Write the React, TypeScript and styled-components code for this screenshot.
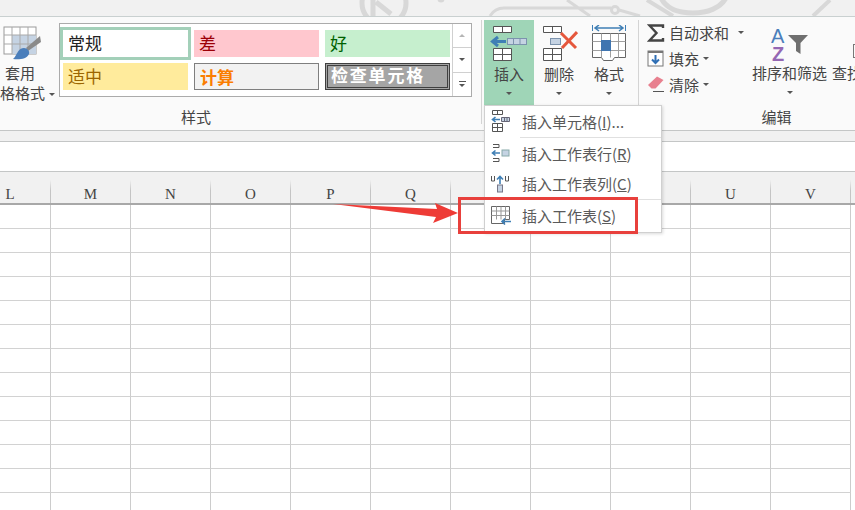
import React from "react";
import styled, { createGlobalStyle } from "styled-components";

const Global = createGlobalStyle`
  html, body {
    margin: 0;
    padding: 0;
    background: #ffffff;
    overflow: hidden;
  }
  body {
    font-family: "Noto Sans CJK SC", "Liberation Sans", sans-serif;
  }
`;

// R, S and T sit behind the open menu, so their letters never show
const COLUMNS = ["L", "M", "N", "O", "P", "Q", "", "", "", "U", "V"];
const ROWS = Array.from({ length: 13 }, (_, i) => i);

function TableStyleIcon() {
  return (
    <svg width="40" height="36" viewBox="0 0 40 36">
      <rect x="3" y="1" width="32" height="27" fill="#fff" stroke="#9a9a9a" />
      <rect x="11" y="9" width="24" height="19" fill="#c5d3e3" />
      <path d="M3 9h32M3 18h32M11 1v27M19 1v27M27 1v27" stroke="#a9a9a9" fill="none" />
      <path d="M39 10 L25 22 L27 25 L40 16 Z" fill="#8a8a8a" />
      <path d="M23 22c-5 0-6 4-8 7-1 2-2 3-3 4 6 1 14 0 16-5 1-3-2-6-5-6z" fill="#4a7ebb" />
    </svg>
  );
}

function InsertCellsIcon() {
  return (
    <svg width="38" height="38" viewBox="0 0 38 38">
      <path d="M3.500 1.500h18v6h-18zM12.500 1.500v6M3.500 23.500h18v12h-18zM12.500 23.500v12M3.500 29.500h18" fill="#fff" stroke="#555" />
      <rect x="17.500" y="13.500" width="19" height="6" fill="#c5d3e3" stroke="#7c93ad" />
      <path d="M23.500 13.500v6M30 13.500v6" stroke="#7c93ad" />
      <path d="M16 16.500H4M8 12 2.500 16.500 8 21" fill="none" stroke="#3f7fb5" strokeWidth="3" />
    </svg>
  );
}

function DeleteCellsIcon() {
  return (
    <svg width="38" height="38" viewBox="0 0 38 38">
      <path d="M3.500 1.500h18v6h-18zM12.500 1.500v6M3.500 23.500h18v12h-18zM12.500 23.500v12M3.500 29.500h18" fill="#fff" stroke="#555" />
      <rect x="10.500" y="13.500" width="10" height="6" fill="#c5d3e3" stroke="#7c93ad" />
      <path d="M21 8l15 15M37 7 22 23" stroke="#e5573c" strokeWidth="3" fill="none" />
    </svg>
  );
}

function FormatCellsIcon() {
  return (
    <svg width="38" height="38" viewBox="0 0 38 38">
      <path d="M2.500 0v6M35.500 0v6" stroke="#3f7fb5" fill="none" />
      <path d="M5 3h28M9 0 5 3l4 3M29 0l4 3-4 3" stroke="#3f7fb5" strokeWidth="1.500" fill="none" />
      <path d="M2.500 8.500h33v24h-11l-2 3h-9l-2-3h-9z" fill="#fff" stroke="#666" />
      <path d="M2.500 16.500h33M2.500 25.500h33M11.500 8.500v24M20.500 8.500v24M28.500 8.500v24" stroke="#a0a0a0" fill="none" />
      <rect x="11" y="15" width="10" height="11" fill="#4075b0" />
    </svg>
  );
}

function SigmaIcon() {
  return (
    <svg width="18" height="18" viewBox="0 0 18 18">
      <path d="M16 4V1.500H2.500L9.500 9l-7 7.500H16V14" fill="none" stroke="#444" strokeWidth="2.400" />
    </svg>
  );
}

function FillIcon() {
  return (
    <svg width="18" height="18" viewBox="0 0 18 18">
      <rect x="1" y="1" width="15" height="15" fill="#fff" stroke="#777" />
      <rect x="1" y="1" width="15" height="2" fill="#777" />
      <path d="M8.500 5v8M5 9.500l3.500 3.500 3.500-3.500" fill="none" stroke="#2f6fb5" strokeWidth="2" />
    </svg>
  );
}

function EraserIcon() {
  return (
    <svg width="18" height="18" viewBox="0 0 18 18">
      <path d="M10 1.500l6.500 3.500-8 8.500H4.500L1 10z" fill="#e8808f" />
      <path d="M6 16.500h11" stroke="#555" />
    </svg>
  );
}

function SortIcon() {
  return (
    <svg width="38" height="36" viewBox="0 0 38 36">
      <text x="0" y="17" fontFamily="Liberation Sans, sans-serif" fontSize="20" fill="#4a7ebb">A</text>
      <text x="1" y="35" fontFamily="Liberation Sans, sans-serif" fontSize="20" fontWeight="700" fill="#9467b3">Z</text>
      <path d="M17 9h20l-7.500 8v11l-4.500-3v-8z" fill="#6f6f6f" />
    </svg>
  );
}

function MenuCellsIcon() {
  return (
    <svg width="20" height="24" viewBox="0 0 20 24">
      <path d="M2.500 1.500h10v4h-10zM7.500 1.500v4M2.500 14.500h10v8h-10zM7.500 14.500v8M2.500 18.500h10" fill="#fff" stroke="#555" />
      <path d="M11.500 8.500h8v4h-8zM14.500 8.500v4M17 8.500v4" fill="#c5d3e3" stroke="#667" />
      <path d="M10 10.500H3M5.500 8 2.500 10.500 5.500 13" fill="none" stroke="#3f7fb5" strokeWidth="1.600" />
    </svg>
  );
}

function MenuRowIcon() {
  return (
    <svg width="20" height="20" viewBox="0 0 20 20">
      <path d="M3 1.500h6v3H3M3 15.500h6v3H3" fill="none" stroke="#555" />
      <rect x="12" y="7" width="7" height="6" fill="#c5d3e3" stroke="#8aa" />
      <path d="M10 10H3M5.500 7.500 2.500 10l3 2.500" fill="none" stroke="#3f7fb5" strokeWidth="1.600" />
    </svg>
  );
}

function MenuColumnIcon() {
  return (
    <svg width="20" height="20" viewBox="0 0 20 20">
      <path d="M1.500 2v5h3V2M15.500 2v5h3V2" fill="none" stroke="#555" />
      <rect x="7.500" y="11" width="5" height="7" fill="#c5d3e3" stroke="#778" />
      <path d="M10 10V3M7 5.500 10 2.500l3 3" fill="none" stroke="#3f7fb5" strokeWidth="1.600" />
    </svg>
  );
}

function MenuSheetIcon() {
  return (
    <svg width="22" height="20" viewBox="0 0 22 20">
      <path d="M1.500 1.500h18v13h-5v4h-13z" fill="#fff" stroke="#666" />
      <path d="M1.500 6h18M1.500 10.500h18M6.500 1.500v13M11 1.500v13M15.500 1.500v13" stroke="#999" fill="none" />
      <path d="M21 16.500h-9M15 13.500 12 16.500l3 3" fill="none" stroke="#3f7fb5" strokeWidth="1.600" />
    </svg>
  );
}

export default function App() {
  return (
    <Page>
      <Global />
      <TopStrip>
        <Watermark width="855" height="16" viewBox="0 0 855 16">
          <g fill="none" stroke="#d8d8d8" strokeWidth="5">
            <circle cx="384" cy="3" r="22" />
            <path d="M373 0v16M376 2l15 12" />
            <path d="M660 -4c6 14 20 17 33 17s28-4 34-17" />
            <path d="M647 0l26 16M830 0l-17 16" strokeWidth="4" />
          </g>
          <g fill="none" stroke="#d8d8d8" strokeWidth="3">
            <path d="M490 16c3-5 8-8 14-8h107M567 0l23 16M619 10l21 6" />
            <circle cx="615" cy="10" r="3.500" />
            <circle cx="441" cy="-1" r="2" />
          </g>
        </Watermark>
      </TopStrip>
      <Ribbon>
        <TableFormat>
          <TableStyleIcon />
          <TableFormatLabel>套用</TableFormatLabel>
          <TableFormatLabel>
            格格式
            <CaretMark />
          </TableFormatLabel>
        </TableFormat>
        <StylesGroup>
          <Gallery>
            <StyleGrid>
              <SelectedStyle>
                <StyleChip $bg="#ffffff" $color="#222222">常规</StyleChip>
              </SelectedStyle>
              <StyleChip $bg="#ffc7ce" $color="#9c0006">差</StyleChip>
              <StyleChip $bg="#c6efce" $color="#006100">好</StyleChip>
              <StyleChip $bg="#ffeb9c" $color="#9c6500">适中</StyleChip>
              <StyleChip $bg="#f2f2f2" $color="#fa7d00" $bold $border="1px solid #7f7f7f">计算</StyleChip>
              <CheckChip>检查单元格</CheckChip>
            </StyleGrid>
            <GalleryScroll>
              <ScrollButton><ScrollUp /></ScrollButton>
              <ScrollButton><ScrollDown /></ScrollButton>
              <ScrollButton><ScrollMore /></ScrollButton>
            </GalleryScroll>
          </Gallery>
          <StylesLabel>样式</StylesLabel>
        </StylesGroup>
        <Separator />
        <CellsGroup>
          <BigButton $active>
            <InsertCellsIcon />
            <BigLabel>插入</BigLabel>
            <CaretMark />
          </BigButton>
          <BigButton>
            <DeleteCellsIcon />
            <BigLabel>删除</BigLabel>
            <CaretMark />
          </BigButton>
          <BigButton>
            <FormatCellsIcon />
            <BigLabel>格式</BigLabel>
            <CaretMark />
          </BigButton>
        </CellsGroup>
        <Separator $tight />
        <EditGroup>
          <EditTools>
            <EditColumn>
              <EditRow>
                <SigmaIcon />
                <span>自动求和</span>
                <WideCaret />
              </EditRow>
              <EditRow>
                <FillIcon />
                <span>填充</span>
                <CaretMark />
              </EditRow>
              <EditRow>
                <EraserIcon />
                <span>清除</span>
                <CaretMark />
              </EditRow>
            </EditColumn>
            <SortButton>
              <SortIcon />
              <BigLabel>排序和筛选</BigLabel>
              <CaretMark />
            </SortButton>
            <FindButton>
              <FindIcon />
              <BigLabel>查找</BigLabel>
            </FindButton>
          </EditTools>
          <EditLabel>编辑</EditLabel>
        </EditGroup>
      </Ribbon>
      <RibbonGap />
      <FormulaBar />
      <HeaderRow>
        {COLUMNS.map((c, i) => (
          <HeaderCell key={i} $first={i === 0}>{c}</HeaderCell>
        ))}
      </HeaderRow>
      {ROWS.map((r) => (
        <SheetRow key={r}>
          {COLUMNS.map((c, i) => (
            <SheetCell key={i} $first={i === 0} />
          ))}
        </SheetRow>
      ))}

      <InsertMenu>
        <MenuItem>
          <MenuIconSlot><MenuCellsIcon /></MenuIconSlot>
          <span>插入单元格(<u>I</u>)...</span>
        </MenuItem>
        <MenuDivider />
        <MenuItem>
          <MenuIconSlot><MenuRowIcon /></MenuIconSlot>
          <span>插入工作表行(<u>R</u>)</span>
        </MenuItem>
        <MenuItem>
          <MenuIconSlot><MenuColumnIcon /></MenuIconSlot>
          <span>插入工作表列(<u>C</u>)</span>
        </MenuItem>
        <MenuDivider />
        <MenuItem>
          <MenuIconSlot><MenuSheetIcon /></MenuIconSlot>
          <span>插入工作表(<u>S</u>)</span>
        </MenuItem>
      </InsertMenu>

      <Highlight />
      <ArrowOverlay width="130" height="24" viewBox="0 0 130 24">
        <polygon points="0,1 104,6 102,0 125,10 100,20 103,14" fill="#ee3b36" />
      </ArrowOverlay>
    </Page>
  );
}

const Page = styled.div`
  position: relative;
  width: 855px;
  height: 510px;
  overflow: hidden;
  background: #ffffff;
`;

const TopStrip = styled.div`
  height: 16px;
  background: #f1f1f1;
  border-bottom: 1px solid #c9d0d0;
`;

const Watermark = styled.svg`
  display: block;
`;

const Ribbon = styled.div`
  display: flex;
  height: 113px;
  background: #fafafa;
  border-bottom: 1px solid #c4c6c6;
  color: #444444;
  font-size: 15px;
`;

const CaretMark = styled.i`
  display: inline-block;
  width: 0;
  height: 0;
  border-left: 3.5px solid transparent;
  border-right: 3.5px solid transparent;
  border-top: 3.5px solid #555555;
`;

const WideCaret = styled(CaretMark)`
  margin-left: 5px;
`;

const TableFormat = styled.div`
  flex: none;
  width: 56px;
  padding-top: 9px;
  margin-right: 3px;
  box-sizing: border-box;
  overflow: hidden;
  svg {
    display: block;
    margin-left: 1px;
    margin-bottom: 1px;
  }
`;

const TableFormatLabel = styled.div`
  height: 20px;
  line-height: 20px;
  white-space: nowrap;
  &:nth-of-type(1) {
    padding-left: 5px;
  }
  i {
    margin-left: 4px;
    vertical-align: middle;
  }
`;

const StylesGroup = styled.div`
  flex: none;
  width: 413px;
  padding-top: 6px;
  display: flex;
  flex-direction: column;
`;

const Gallery = styled.div`
  display: flex;
  height: 74px;
  box-sizing: border-box;
  background: #ffffff;
  border: 1px solid #ababab;
`;

const StyleGrid = styled.div`
  flex: 1;
  display: grid;
  grid-template-columns: repeat(3, 125px);
  grid-template-rows: 27px 27px;
  column-gap: 6px;
  row-gap: 6px;
  padding: 6px 0 0 3px;
`;

const SelectedStyle = styled.div`
  display: flex;
  margin: -3px;
  padding: 0;
  border: 3px solid #a3d0b9;
  background: #ffffff;
`;

const StyleChip = styled.div<{ $bg: string; $color: string; $bold?: boolean; $border?: string }>`
  flex: 1;
  padding-left: 5px;
  box-sizing: border-box;
  line-height: 25px;
  font-size: 17px;
  background: ${(p) => p.$bg};
  color: ${(p) => p.$color};
  font-weight: ${(p) => (p.$bold ? 700 : 400)};
  border: ${(p) => p.$border ?? "none"};
`;

const CheckChip = styled.div`
  box-sizing: border-box;
  padding-left: 3px;
  line-height: 18px;
  font-size: 17px;
  letter-spacing: 1.800px;
  font-weight: 700;
  color: #ffffff;
  background: #a5a5a5;
  border: 3px double #3f3f3f;
  white-space: nowrap;
`;

const GalleryScroll = styled.div`
  flex: none;
  width: 18px;
  display: flex;
  flex-direction: column;
  border-left: 1px solid #d0d0d0;
`;

const ScrollButton = styled.div`
  flex: 1;
  display: flex;
  flex-direction: column;
  align-items: center;
  justify-content: center;
  gap: 2px;
  border-bottom: 1px solid #d0d0d0;
  &:last-child {
    border-bottom: none;
  }
`;

const ScrollUp = styled.i`
  width: 0;
  height: 0;
  border-left: 3px solid transparent;
  border-right: 3px solid transparent;
  border-bottom: 3px solid #b5b5b5;
`;

const ScrollDown = styled.i`
  width: 0;
  height: 0;
  border-left: 3px solid transparent;
  border-right: 3px solid transparent;
  border-top: 3px solid #555555;
`;

const ScrollMore = styled(ScrollDown)`
  position: relative;
  margin-top: 2px;
  &::before {
    content: "";
    position: absolute;
    left: -3px;
    top: -6px;
    width: 7px;
    height: 1px;
    background: #555555;
  }
`;

const GroupLabel = styled.div`
  margin-top: 10px;
  text-align: center;
  line-height: 20px;
  font-size: 15px;
`;

const StylesLabel = styled(GroupLabel)`
  padding-right: 139px;
`;

const EditLabel = styled(GroupLabel)`
  padding-left: 59px;
`;

const Separator = styled.div<{ $tight?: boolean }>`
  flex: none;
  width: 1px;
  height: 104px;
  margin: ${(p) => (p.$tight ? "3px 0 0 4px" : "3px 2px 0 9px")};
  background: #d4d4d4;
`;

const CellsGroup = styled.div`
  flex: none;
  display: flex;
  align-items: flex-start;
  padding-top: 3px;
`;

const BigButton = styled.div<{ $active?: boolean }>`
  flex: none;
  width: 50px;
  height: 85px;
  padding-top: 5px;
  box-sizing: border-box;
  display: flex;
  flex-direction: column;
  align-items: center;
  background: ${(p) => (p.$active ? "#9fd5b7" : "transparent")};
  i {
    margin-top: 8px;
  }
`;

const BigLabel = styled.div`
  margin-top: 1px;
  line-height: 20px;
  white-space: nowrap;
`;

const EditGroup = styled.div`
  flex: 1;
  min-width: 0;
  display: flex;
  flex-direction: column;
`;

const EditTools = styled.div`
  flex: none;
  height: 80px;
  display: flex;
  overflow: visible;
`;

const EditColumn = styled.div`
  flex: none;
  width: 112px;
  padding: 3px 0 0 8px;
  box-sizing: border-box;
  display: flex;
  flex-direction: column;
`;

const EditRow = styled.div`
  height: 27px;
  display: flex;
  align-items: center;
  gap: 4px;
  white-space: nowrap;
`;

const SortButton = styled.div`
  flex: none;
  width: 77px;
  padding-top: 9px;
  display: flex;
  flex-direction: column;
  align-items: center;
  i {
    margin-top: 8px;
  }
`;

const FindButton = styled.div`
  flex: none;
  padding: 9px 0 0 4px;
  display: flex;
  flex-direction: column;
  position: relative;
`;

const FindIcon = styled.div`
  height: 36px;
  &::after {
    content: "";
    position: absolute;
    left: 25px;
    top: 27px;
    width: 8px;
    height: 12px;
    border: 1px solid #777777;
  }
`;

const RibbonGap = styled.div`
  height: 10px;
  background: #f1f1f1;
  border-bottom: 1px solid #c4c6c6;
`;

const FormulaBar = styled.div`
  height: 29px;
  background: #ffffff;
`;

const HeaderRow = styled.div`
  display: flex;
  height: 31px;
  background: #f1f1f1;
  border-top: 1px solid #c4c6c6;
  border-bottom: 2px solid #a8a8a8;
`;

const HeaderCell = styled.div<{ $first?: boolean }>`
  flex: none;
  width: ${(p) => (p.$first ? "51px" : "80px")};
  height: 31px;
  box-sizing: border-box;
  padding-right: ${(p) => (p.$first ? "31px" : "1px")};
  text-align: center;
  line-height: 44px;
  font-family: "Liberation Serif", serif;
  font-size: 15px;
  color: #444444;
  overflow: hidden;
  background: linear-gradient(to bottom, transparent 25%, #c4c4c4 60%) right / 1px 100% no-repeat;
`;

const SheetRow = styled.div`
  display: flex;
  height: 24px;
`;

const SheetCell = styled.div<{ $first?: boolean }>`
  flex: none;
  width: ${(p) => (p.$first ? "51px" : "80px")};
  box-sizing: border-box;
  border-right: 1px solid #cccccc;
  border-bottom: 1px solid #d2d2d2;
`;

const InsertMenu = styled.div`
  position: absolute;
  left: 484px;
  top: 105px;
  width: 178px;
  height: 128px;
  box-sizing: border-box;
  background: #ffffff;
  border: 1px solid #d0d0d0;
  box-shadow: 1px 1px 3px rgba(0, 0, 0, 0.15);
  font-size: 15px;
  color: #5a5a5a;
`;

const MenuItem = styled.div`
  height: 30.700px;
  display: flex;
  align-items: center;
  white-space: nowrap;
`;

const MenuIconSlot = styled.div`
  flex: none;
  width: 37px;
  padding-left: 5px;
  box-sizing: border-box;
  display: flex;
  svg {
    display: block;
  }
`;

const MenuDivider = styled.div`
  height: 1px;
  margin-left: 35px;
  background: #e0e0e0;
`;

const Highlight = styled.div`
  position: absolute;
  left: 458px;
  top: 197px;
  width: 180px;
  height: 37px;
  box-sizing: border-box;
  border: 3px solid #e8403c;
`;

const ArrowOverlay = styled.svg`
  position: absolute;
  left: 333px;
  top: 203px;
`;
